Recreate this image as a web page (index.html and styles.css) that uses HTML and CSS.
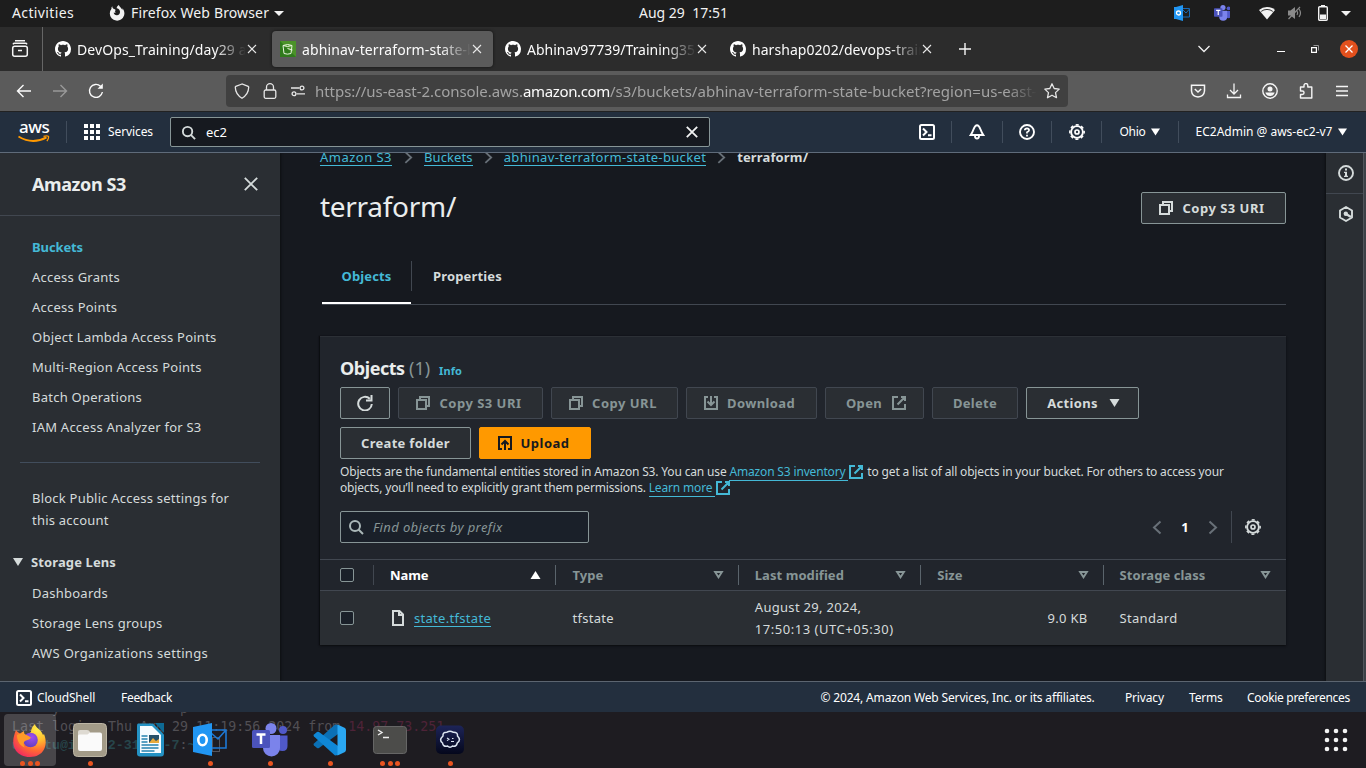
FILE: index.html
```html
<!DOCTYPE html>
<html lang="en">
<head>
<meta charset="utf-8">
<title>abhinav-terraform-state-bucket - S3 bucket</title>
<link rel="stylesheet" href="styles.css">
</head>
<body>
<svg class="defs" aria-hidden="true">
  <symbol id="github" viewBox="0 0 16 16"><path fill="#fff" d="M8 0C3.58 0 0 3.58 0 8c0 3.54 2.29 6.53 5.47 7.59.4.07.55-.17.55-.38 0-.19-.01-.82-.01-1.49-2.01.37-2.53-.49-2.69-.94-.09-.23-.48-.94-.82-1.13-.28-.15-.68-.52-.01-.53.63-.01 1.08.58 1.23.82.72 1.21 1.87.87 2.33.66.07-.52.28-.87.51-1.07-1.78-.2-3.64-.89-3.64-3.95 0-.87.31-1.59.82-2.15-.08-.2-.36-1.02.08-2.12 0 0 .67-.21 2.2.82.64-.18 1.32-.27 2-.27s1.36.09 2 .27c1.53-1.04 2.2-.82 2.2-.82.44 1.1.16 1.92.08 2.12.51.56.82 1.27.82 2.15 0 3.07-1.87 3.75-3.65 3.95.29.25.54.73.54 1.48 0 1.07-.01 1.93-.01 2.2 0 .21.15.46.55.38A8.01 8.01 0 0 0 16 8c0-4.42-3.58-8-8-8z"/></symbol>
  <symbol id="close" viewBox="0 0 10 10"><path d="M1 1l8 8M9 1l-8 8" fill="none" stroke="currentColor" stroke-width="1.1"/></symbol>
  <symbol id="copy" viewBox="0 0 16 16"><path d="M2 5h9v9H2zM5 5V2h9v9h-3" fill="none" stroke="currentColor" stroke-width="2"/></symbol>
  <symbol id="external" viewBox="0 0 16 16"><path d="M7 2H2v12h12V9M10 2h4v4M14 2L6.5 9.500" fill="none" stroke="currentColor" stroke-width="2"/></symbol>
  <symbol id="search" viewBox="0 0 16 16"><circle cx="7" cy="7" r="5" fill="none" stroke="currentColor" stroke-width="2"/><path d="M10.500 10.500L15 15" stroke="currentColor" stroke-width="2"/></symbol>
  <symbol id="gear" viewBox="0 0 16 16"><circle cx="8" cy="8" r="5.900" fill="none" stroke="currentColor" stroke-width="1.900"/><circle cx="8" cy="8" r="7.200" fill="none" stroke="currentColor" stroke-width="1.500" stroke-dasharray="3.100 2.555" stroke-dashoffset="1.550"/><circle cx="8" cy="8" r="2" fill="none" stroke="currentColor" stroke-width="1.700"/></symbol>
  <symbol id="shell" viewBox="0 0 16 16"><rect x="1" y="1" width="14" height="14" rx="1.500" fill="none" stroke="currentColor" stroke-width="2"/><path d="M4 4.500L7.500 8 4 11.500M9 11.300h3.500" fill="none" stroke="currentColor" stroke-width="2"/></symbol>
  <symbol id="down" viewBox="0 0 10 8"><path d="M0 0h10L5 8z" fill="currentColor"/></symbol>
  <symbol id="sort" viewBox="0 0 10 8"><path d="M1.600 1h6.800L5 6.300z" fill="none" stroke="currentColor" stroke-width="1.900"/></symbol>
  <symbol id="chev" viewBox="0 0 10 14"><path d="M1.500 1L8 7l-6.500 6" fill="none" stroke="currentColor" stroke-width="2"/></symbol>
</svg>

<header class="topbar">
  <span class="activities">Activities</span>
  <svg class="fox" width="16" height="16" viewBox="0 0 16 16"><path d="M3.300 1.200C2.400 2.300 2.300 3 2.500 3.700A7.300 7.300 0 1 0 14.800 5.500c-.3-.9-.8-1.600-1.500-2.200.2.700.2 1.200.1 1.700C12.500 3 10.800 2.200 9.800 0 8.400.8 7.700 2 7.700 3.200c1.500.2 2.600 1 3 2.200.9 2.200-.3 4.700-2.700 4.900-1.700.1-3.300-1-3.300-2.700.6.300 1.500.2 2.300-.3-.6-.2-1.200-.7-1.200-1.200l.8-.6-.5-1.300c-.9.100-1.300-.3-1.900-.8-.5-.4-.9-1-.9-2.200z" fill="#f2f2f2"/></svg>
  <span class="app">Firefox Web Browser</span>
  <svg class="caret" width="10" height="5" viewBox="0 0 10 5"><path d="M0 0h10L5 5z" fill="#f2f2f2"/></svg>
  <span class="clock">Aug 29&nbsp; 17:51</span>
  <span class="tray">
    <svg width="16" height="16" viewBox="0 0 16 16"><path d="M9 3.500h6.500v8.500H9M9 5l3 3 3.500-4" fill="none" stroke="#1769b5"/><path d="M0 2h2l7-2v16l-7-2H0z" fill="#2196f3"/><circle cx="4.500" cy="8" r="2" fill="none" stroke="#fff" stroke-width="1.300"/></svg>
    <svg width="16" height="16" viewBox="0 0 34 34"><use href="#teams"/></svg>
    <svg width="16" height="14" viewBox="0 0 16 14"><path d="M8 13.500L0 4a12 12 0 0 1 16 0z" fill="#f2f2f2"/><path d="M2.200 5.400a9.500 9.500 0 0 1 11.600 0" stroke="#1d1d1d" fill="none" stroke-width=".9"/></svg>
    <svg width="16" height="14" viewBox="0 0 16 14"><path d="M1 4.500h2.500L8 1v12L3.500 9.500H1z" fill="#8a8a8a"/><path d="M10 5q1.500 2 0 4M12 3q3 4 0 8" stroke="#8a8a8a" stroke-width="1.200" fill="none"/><path d="M1.500 13L13 1" stroke="#8a8a8a" stroke-width="1.200"/></svg>
    <svg width="10" height="16" viewBox="0 0 10 16"><path d="M3 0h4v2H3z" fill="#f2f2f2"/><rect x=".7" y="1.700" width="8.600" height="13.500" rx="1" fill="none" stroke="#f2f2f2" stroke-width="1.400"/><path d="M2 9.500h6V14H2z" fill="#f2f2f2"/></svg>
    <svg width="10" height="5" viewBox="0 0 10 5"><path d="M0 0h10L5 5z" fill="#f2f2f2"/></svg>
  </span>
</header>

<nav class="tabs">
  <span class="archive"><svg width="18" height="18" viewBox="0 0 18 18" fill="none" stroke="#f5f5f5" stroke-width="1.500"><rect x="1.700" y="6.200" width="14.600" height="10" rx="2"/><path d="M2 4.300q.5-1 1.500-1h11q1 0 1.500 1M4 .8h10M7 10.500h4"/></svg></span>
  <div class="tab"><svg class="fav"><use href="#github"/></svg><span class="title">DevOps_Training/day29 at</span><svg class="x"><use href="#close"/></svg></div>
  <div class="tab active"><svg class="fav" viewBox="0 0 16 16"><path d="M0 0h16v16H0z" fill="#2f7a1c"/><path d="M16 0v16L0 0z" fill="#5fa132" opacity=".6"/><path d="M3 4.500q5-2 9 0l-1 8q-3.500 1.300-7 0zM3 4.500q4.500 2 9 0M7.500 7.500l5 1.500" fill="none" stroke="#e8f5dc"/></svg><span class="title t2">abhinav-terraform-state-bu</span><svg class="x"><use href="#close"/></svg></div>
  <div class="tab"><svg class="fav"><use href="#github"/></svg><span class="title t3">Abhinav97739/Training35</span><svg class="x"><use href="#close"/></svg></div>
  <div class="tab"><svg class="fav"><use href="#github"/></svg><span class="title t4">harshap0202/devops-train</span><svg class="x"><use href="#close"/></svg></div>
  <svg class="plus" width="12" height="12" viewBox="0 0 12 12"><path d="M6 0v12M0 6h12" stroke="#f5f5f5" stroke-width="1.400"/></svg>
  <span class="winctl">
    <svg width="12" height="8" viewBox="0 0 12 8"><path d="M.5 1L6 6.500 11.500 1" fill="none" stroke="#f0f0f0" stroke-width="1.300"/></svg>
    <svg class="min" width="8" height="2"><path d="M0 .5h8" stroke="#fff" stroke-width="1"/></svg>
    <svg width="8" height="8" viewBox="0 0 8 8"><path d="M.6 2.600h4.800v4.800H.6z" fill="none" stroke="#fff" stroke-width="1.200"/><path d="M2.500.5h5v5" fill="none" stroke="#999"/></svg>
    <svg width="18" height="18" viewBox="0 0 18 18"><circle cx="9" cy="9" r="9" fill="#e2501d"/><path d="M5.500 5.500l7 7M12.500 5.500l-7 7" stroke="#fff" stroke-width="1.300"/></svg>
  </span>
</nav>

<div class="toolbar">
  <div class="navbtns">
    <svg width="16" height="16" viewBox="0 0 16 16"><path d="M15 8H1.500M7.500 2L1.500 8l6 6" fill="none" stroke="#fbfbfb" stroke-width="1.400"/></svg>
    <svg width="16" height="16" viewBox="0 0 16 16"><path d="M1 8h13.500M8.500 2l6 6-6 6" fill="none" stroke="#999" stroke-width="1.400"/></svg>
    <svg width="16" height="16" viewBox="0 0 16 16"><path d="M12.500 3.200A6.500 6.500 0 1 0 14.400 9" fill="none" stroke="#fbfbfb" stroke-width="1.400"/><path d="M14.800.5v5.300H9.500z" fill="#fbfbfb"/></svg>
  </div>
  <div class="urlbar">
    <svg width="16" height="16" viewBox="0 0 16 16"><path d="M8 1L1.800 3.300q-.6.300-.5 1Q1.500 11.500 8 15.200q6.500-3.700 6.700-10.900.1-.7-.5-1z" fill="none" stroke="#e6e6e6" stroke-width="1.300"/></svg>
    <svg width="16" height="16" viewBox="0 0 16 16"><rect x="2.200" y="7" width="11.600" height="8.300" rx="1.500" fill="none" stroke="#e6e6e6" stroke-width="1.300"/><path d="M4.500 7V4.200a3.500 3.500 0 0 1 7 0V7" fill="none" stroke="#e6e6e6" stroke-width="1.300"/></svg>
    <svg width="16" height="16" viewBox="0 0 16 16" fill="none" stroke="#e6e6e6" stroke-width="1.300"><path d="M1 5h8.500M6.500 10.800H15"/><circle cx="12" cy="5" r="1.900"/><circle cx="4" cy="10.800" r="1.900"/></svg>
    <span class="url"><span class="host">https://us-east-2.console.aws.</span><b>amazon.com</b>/s3/buckets/abhinav-terraform-state-bucket?region=us-east-2</span>
    <svg width="16" height="16" viewBox="0 0 16 16"><path d="M8 .8l2.200 4.700 5 .6-3.700 3.500 1 5.100L8 12.200l-4.500 2.500 1-5.100L.8 6.100l5-.6z" fill="none" stroke="#e6e6e6" stroke-width="1.300" stroke-linejoin="round"/></svg>
  </div>
  <div class="tools">
    <svg width="16" height="16" viewBox="0 0 16 16" fill="none" stroke="#f5f5f5" stroke-width="1.500"><path d="M1.500 2.200h13V8q-.5 5.500-6.500 6Q2 13.500 1.500 8zM4.800 6L8 9l3.200-3"/></svg>
    <svg width="16" height="16" viewBox="0 0 16 16" fill="none" stroke="#f5f5f5" stroke-width="1.300"><path d="M8 .5v10.500M4 7l4 4 4-4M1.500 11.500v3h13v-3"/></svg>
    <svg width="16" height="16" viewBox="0 0 16 16"><circle cx="8" cy="8" r="7.200" fill="none" stroke="#f5f5f5" stroke-width="1.400"/><circle cx="8" cy="6" r="2.500" fill="#f5f5f5"/><path d="M3.300 9.500h9.400Q11.500 13 8 13T3.300 9.500z" fill="#f5f5f5"/></svg>
    <svg width="16" height="16" viewBox="0 0 16 16"><path d="M6 4V2.500a1.900 1.900 0 0 1 3.800 0V4h4v11H2.500v-3.500h1.800a1.700 1.700 0 0 0 0-3.500H2.500V4z" fill="none" stroke="#f5f5f5" stroke-width="1.400" stroke-linejoin="round"/></svg>
    <svg width="16" height="16" viewBox="0 0 16 16"><path d="M2 3.500h12M2 8h12M2 12.500h12" stroke="#f5f5f5" stroke-width="1.300"/></svg>
  </div>
</div>

<header class="aws">
  <div class="logo"><span>aws</span><svg width="32" height="9" viewBox="0 0 32 9"><path d="M.5 1.500q14 8.500 28 .8" fill="none" stroke="#f90" stroke-width="1.900"/><path d="M25.500 1.300q4-.9 5 .1.500 1.800-1.600 4.800" fill="none" stroke="#f90" stroke-width="1.300"/></svg></div>
  <i class="sep"></i>
  <svg class="grid" width="16" height="16" viewBox="0 0 16 16" fill="#fff"><path d="M0 0h4v4H0zM6 0h4v4H6zM12 0h4v4h-4zM0 6h4v4H0zM6 6h4v4H6zM12 6h4v4h-4zM0 12h4v4H0zM6 12h4v4H6zM12 12h4v4h-4z"/></svg>
  <span class="services">Services</span>
  <div class="search"><svg width="15" height="15"><use href="#search"/></svg><span>ec2</span><svg width="12" height="12" viewBox="0 0 12 12"><path d="M.8.8l10.400 10.400M11.200.8L.8 11.200" stroke="#f2f3f3" stroke-width="1.800"/></svg></div>
  <div class="acct">
    <span class="cell c1"><svg width="16" height="16"><use href="#shell"/></svg></span><i class="sep"></i>
    <span class="cell c2"><svg width="16" height="16" viewBox="0 0 16 16"><path d="M8 1.200c-3.300 0-2.800 5-6.300 9.800h12.600C10.800 6.200 11.300 1.200 8 1.200z" fill="none" stroke="#fff" stroke-width="2"/><path d="M6 12a2 2.500 0 0 0 4 0" stroke="#fff" stroke-width="1.900" fill="none"/></svg></span><i class="sep"></i>
    <span class="cell c3"><svg width="16" height="16" viewBox="0 0 16 16"><circle cx="8" cy="8" r="7" fill="none" stroke="#fff" stroke-width="1.900"/><path d="M5.800 6.300Q5.900 4.300 8 4.300q2 .1 2.100 1.900Q10 7.300 8 8.200v1.300" fill="none" stroke="#fff" stroke-width="1.700"/><path d="M7.100 10.700h1.800v1.700H7.100z" fill="#fff"/></svg></span><i class="sep"></i>
    <span class="cell c4"><svg width="16" height="16"><use href="#gear"/></svg></span><i class="sep"></i>
    <span class="cell c5"><span class="ohio">Ohio</span><svg width="9" height="8"><use href="#down"/></svg></span><i class="sep"></i>
    <span class="cell c6"><span>EC2Admin @ aws-ec2-v7</span><svg width="9" height="8"><use href="#down"/></svg></span>
  </div>
</header>

<div class="work">
  <aside class="side">
    <div class="sidehead"><h2>Amazon S3</h2><svg width="14" height="14" viewBox="0 0 14 14"><path d="M.8.8l12.400 12.400M13.200.8L.8 13.200" stroke="#d5dbdb" stroke-width="1.800"/></svg></div>
    <ul class="links">
      <li class="on">Buckets</li><li>Access Grants</li><li>Access Points</li><li>Object Lambda Access Points</li><li>Multi-Region Access Points</li><li>Batch Operations</li><li>IAM Access Analyzer for S3</li>
    </ul>
    <hr>
    <p class="block">Block Public Access settings for<br>this account</p>
    <div class="group"><svg width="10" height="8"><use href="#down"/></svg><span>Storage Lens</span></div>
    <ul class="links sub"><li>Dashboards</li><li>Storage Lens groups</li><li class="org">AWS Organizations settings</li></ul>
  </aside>

  <main class="main">
    <div class="crumbs"><a class="k1">Amazon S3</a><svg><use href="#chev"/></svg><a class="k2">Buckets</a><svg><use href="#chev"/></svg><a>abhinav-terraform-state-bucket</a><svg><use href="#chev"/></svg><b>terraform/</b></div>
    <div class="titlebar"><h1>terraform/</h1><button class="btn b-copy"><svg><use href="#copy"/></svg><span>Copy S3 URI</span></button></div>
    <div class="pagetabs"><span class="sel">Objects</span><i></i><span class="other">Properties</span></div>

    <section class="card">
      <h3><b>Objects</b> <span>(1)</span> <a>Info</a></h3>
      <div class="actions">
        <button class="btn b-ref"><svg viewBox="0 0 16 16"><path d="M12.800 3.800A6.800 6.800 0 1 0 14.800 9M14.500 0v5.500H9" fill="none" stroke="currentColor" stroke-width="2"/></svg></button>
        <button class="btn off b-copy"><svg><use href="#copy"/></svg><span>Copy S3 URI</span></button>
        <button class="btn off b-url"><svg><use href="#copy"/></svg><span>Copy URL</span></button>
        <button class="btn off b-dl"><svg viewBox="0 0 16 16"><path d="M5 2H2v12h12V2h-3M8 1v9M4.500 6.500L8 10l3.500-3.500" fill="none" stroke="currentColor" stroke-width="2"/></svg><span>Download</span></button>
        <button class="btn off b-open"><span>Open</span><svg><use href="#external"/></svg></button>
        <button class="btn off b-del"><span>Delete</span></button>
        <button class="btn b-act"><span>Actions</span><svg class="tri"><use href="#down"/></svg></button>
        <button class="btn b-new"><span>Create folder</span></button>
        <button class="btn b-up"><svg viewBox="0 0 16 16"><path d="M5 14H2V2h12v12h-3M8 15V6M4.500 9.500L8 6l3.500 3.500" fill="none" stroke="currentColor" stroke-width="2"/></svg><span>Upload</span></button>
      </div>
      <p class="desc">Objects are the fundamental entities stored in Amazon S3. You can use <a>Amazon S3 inventory </a><svg><use href="#external"/></svg> to get a list of all objects in your bucket. For others to access your<br>objects, you’ll need to explicitly grant them permissions. <a>Learn more </a><svg><use href="#external"/></svg></p>
      <div class="filter">
        <div class="find"><svg width="16" height="16"><use href="#search"/></svg><span>Find objects by prefix</span></div>
        <div class="pager"><svg class="prev" width="10" height="15"><use href="#chev"/></svg><b>1</b><svg width="10" height="15"><use href="#chev"/></svg><i></i><svg class="cog" width="16" height="16"><use href="#gear"/></svg></div>
      </div>
      <div class="row head">
        <span class="chk"><i></i></span>
        <span class="col name lit"><b>Name</b><svg viewBox="0 0 10 8"><path d="M0 8h10L5 0z" fill="#fff"/></svg></span>
        <span class="col"><b>Type</b><svg><use href="#sort"/></svg></span>
        <span class="col"><b>Last modified</b><svg><use href="#sort"/></svg></span>
        <span class="col"><b>Size</b><svg><use href="#sort"/></svg></span>
        <span class="col"><b>Storage class</b><svg><use href="#sort"/></svg></span>
      </div>
      <div class="row body">
        <span class="chk"><i></i></span>
        <span class="cellb name"><svg width="12" height="16" viewBox="0 0 12 16"><path d="M1 1h6.500L11 4.500V15H1zM7 1v4h4" fill="none" stroke="#d5dbdb" stroke-width="2"/></svg><a>state.tfstate</a></span>
        <span class="cellb">tfstate</span>
        <span class="cellb date"><span>August 29, 2024,</span><br><span class="time">17:50:13 (UTC+05:30)</span></span>
        <span class="cellb size">9.0 KB</span>
        <span class="cellb">Standard</span>
      </div>
    </section>
  </main>

  <aside class="rail">
    <span><svg width="16" height="16" viewBox="0 0 16 16"><circle cx="8" cy="8" r="7" fill="none" stroke="#d5dbdb" stroke-width="1.900"/><path d="M7 3.500h2v2H7zM6 6.700h3v4h1V12H6v-1.300h1V8H6z" fill="#d5dbdb"/></svg></span>
    <span><svg width="16" height="16" viewBox="0 0 16 16"><path d="M8 1l6 3.500v7L8 15l-6-3.500v-7z" fill="none" stroke="#d5dbdb" stroke-width="1.900" stroke-linejoin="round"/><path d="M8 8l5 3" stroke="#d5dbdb" stroke-width="2.200"/><circle cx="7.800" cy="7.800" r="2.200" fill="#d5dbdb"/></svg></span>
    <i class="scroll"></i>
  </aside>
</div>

<footer class="foot">
  <svg width="16" height="16"><use href="#shell"/></svg><span class="cs">CloudShell</span><span class="fb">Feedback</span>
  <span class="copyr">© 2024, Amazon Web Services, Inc. or its affiliates.</span><span class="pv">Privacy</span><span class="tm">Terms</span><span class="ck">Cookie preferences</span>
</footer>

<div class="dock">
  <pre class="term">     y               p
Last login: Thu Aug 29 11:19:56 2024 from <em>14.97.73.251</em>
<b>ubuntu@ip-172-31-40-7</b>:<b>~</b>$ <i></i></pre>
  <div class="app on"><svg viewBox="0 0 34 34">
    <defs><radialGradient id="fx" cx=".75" cy=".15" r="1"><stop offset="0" stop-color="#fff04d"/><stop offset=".35" stop-color="#ffbd2e"/><stop offset=".65" stop-color="#ff6a32"/><stop offset="1" stop-color="#ef1f68"/></radialGradient><radialGradient id="fp" cx=".6" cy=".3" r=".8"><stop offset="0" stop-color="#a04ff0"/><stop offset="1" stop-color="#5a3cb8"/></radialGradient></defs>
    <path d="M3 7c1 1.500 2 2.500 4 3.500L11 8c0 2 .500 3.500 2 4.500L18 9c0-3 1.500-6 4-8 .5 4 6 5 8 11l1-1c5 12-1 23-14 23S-2 24 1 13c.5-2 1-4 2-6z" fill="url(#fx)"/><circle cx="17.500" cy="17" r="7.300" fill="url(#fp)"/><path d="M4 12c5-2.500 9-.5 14 2.500-1 2-3 2.500-5 3-3 1-3 4.500-1 7-5-1.500-8-6.500-8-12.500z" fill="#ff9a27"/></svg><span class="dots"><i></i><i></i><i></i></span></div>
  <div class="app"><svg viewBox="0 0 34 34"><rect x=".5" y=".5" width="33" height="33" rx="4" fill="#a39b88" stroke="#bdb6a5"/><path d="M5 9q0-2 2-2h7q2 0 3 2v5H5z" fill="#dedad2"/><path d="M5 13q0-1.500 1.500-1.500h8L17 9.500h10q2 0 2 2V26q0 2-2 2H7q-2 0-2-2z" fill="#fafafa"/></svg><span class="dots"><i></i></span></div>
  <div class="app"><svg viewBox="0 0 34 34"><path d="M5 .5h15L31 11.500V30q0 3.500-3 3.500H7q-3 0-3-3V3q0-2.500 1-2.500z" fill="#2492c4"/><path d="M22 0h9v10z" fill="#0e6a94"/><path d="M7 3h12l9 9v18H7z" fill="#f5fbff"/><path d="M8.500 13h6M8.500 16h6M8.500 19h6M8.500 22h17M8.500 25h17M8.500 28h13" stroke="#2583b0" stroke-width="1.300"/><path d="M16 12h10v8H16z" fill="#24506b"/><path d="M16 20l4-5 3 3 3-2v4z" fill="#e6a93c"/></svg></div>
  <div class="app"><svg viewBox="0 0 34 34"><path d="M18 7h15v18H18M18 10l7 6L33 7" fill="none" stroke="#1d78d5" stroke-width="1.600"/><path d="M0 4l19-4v33L0 29z" fill="#2196f3"/><ellipse cx="9.500" cy="17" rx="4.200" ry="5.300" fill="none" stroke="#fff" stroke-width="2.600"/></svg><span class="dots"><i></i></span></div>
  <div class="app"><svg class="tm" viewBox="0 0 36 34"><g id="teams"><circle cx="31" cy="7" r="4" fill="#5059c9"/><path d="M26 12.500h9.500V23q0 5-5 5T26 23z" fill="#5059c9"/><circle cx="19" cy="5.500" r="5.500" fill="#7b83eb"/><path d="M11 12h17v13a8.500 8.500 0 0 1-17 0z" fill="#7b83eb"/><rect y="7" width="18" height="18" rx="1.500" fill="#4b53bc"/><path d="M4.500 11.500h9M9 11.500V21" stroke="#fff" stroke-width="2.500"/></g></svg><span class="dots"><i></i></span></div>
  <div class="app"><svg viewBox="0 0 34 34"><path d="M25 2v9L6 25q-1 .5-2 0l-3-2.500q-1-1 0-2L22 1.500z" fill="#0b70b5"/><path d="M25 32v-9L6 9q-1-.5-2 0l-3 2.500q-1 1 0 2L22 32.500z" fill="#0f87d6"/><path d="M24.500 1.500l7 3.200q1.500.8 1.500 2.500v19.600q0 1.700-1.500 2.500l-7 3.200z" fill="#2aa7f2"/></svg><span class="dots"><i></i></span></div>
  <div class="app"><svg viewBox="0 0 34 34"><rect x=".5" y="3.500" width="33" height="27" rx="3" fill="#4c4c4a" stroke="#666"/><path d="M5 7l4 2.500L5 12M10 14.500h6" fill="none" stroke="#eee" stroke-width="1.400"/></svg><span class="dots"><i></i><i></i><i></i></span></div>
  <div class="app"><svg viewBox="0 0 34 34"><defs><linearGradient id="tg" x2="0" y2="1"><stop stop-color="#1d2458"/><stop offset="1" stop-color="#04071c"/></linearGradient></defs><rect x="3" y="2.500" width="28" height="28.500" rx="5" fill="url(#tg)"/><path d="M10 13q-.5-4 4-3.800 3-2 6 0 5-.3 4.500 3.800 4 4-.3 7-.7 4-4.700 3-2.500 2.500-5 0-4.500 1-5-3-4-3 .5-7z" fill="none" stroke="#dde6f2" stroke-width="1.500"/><path d="M14 15l2 1.300-2 1.300M18 18.500h3M19 15.500h1.500" fill="none" stroke="#dde6f2" stroke-width="1.100"/></svg><span class="dots"><i></i></span></div>
  <svg class="apps" width="24" height="24" viewBox="0 0 24 24" fill="#f5f5f5"><circle cx="3" cy="3" r="2.300"/><circle cx="12" cy="3" r="2.300"/><circle cx="21" cy="3" r="2.300"/><circle cx="3" cy="12" r="2.300"/><circle cx="12" cy="12" r="2.300"/><circle cx="21" cy="12" r="2.300"/><circle cx="3" cy="21" r="2.300"/><circle cx="12" cy="21" r="2.300"/><circle cx="21" cy="21" r="2.300"/></svg>
</div>
</body>
</html>
```
FILE: styles.css
```css
* { box-sizing: border-box; }
body {
  margin: 0; width: 1366px; height: 768px; overflow: hidden;
  display: flex; flex-direction: column;
  font: 13px/22px "Noto Sans", "Open Sans", sans-serif;
  color: #d5dbdb; background: #16191f;
}
svg { display: block; flex: none; }
.defs { position: absolute; width: 0; height: 0; }
h1, h2, h3, p, ul, pre { margin: 0; padding: 0; font-weight: 400; }
ul { list-style: none; }
i { display: block; }

/* Desktop bar */
.topbar { height: 27px; flex: none; background: #1d1d1d; color: #f2f2f2; display: flex; align-items: center; font-size: 14px; padding: 0 15px 1px 12px; white-space: nowrap; }
.activities { width: 97px; letter-spacing: .37px; }
.app { letter-spacing: .14px; }
.topbar .app { width: 143px; margin-left: 6px; }
.clock { margin-left: 355px; }
.tray { margin-left: auto; display: flex; align-items: center; }
.tray svg { margin-left: 12px; }
.tray svg:nth-child(2) { margin-left: 24px; }
.tray svg:nth-child(3) { margin-left: 29px; }
.tray svg:nth-child(5) { margin-left: 15px; }
.tray svg:nth-child(6) { margin-left: 13px; }

/* Browser tabs */
.tabs { height: 44px; flex: none; background: #2c2c2c; display: flex; align-items: center; color: #fbfbfb; }
.archive { width: 43px; height: 44px; border-right: 1px solid #666; display: flex; align-items: center; padding-left: 11px; margin-right: 4px; }
.tab { width: 221px; height: 36px; margin-right: 4px; padding: 0 11px 0 8px; border-radius: 4px; display: flex; align-items: center; }
.tab.active { background: #5b5b5b; box-shadow: 0 0 3px #111; }
.fav { width: 16px; height: 16px; }
.title { margin-left: 6px; width: 170px; overflow: hidden; white-space: nowrap; font-size: 14px; letter-spacing: .1px; padding-top: 1px; -webkit-mask-image: linear-gradient(90deg, #000 138px, transparent 169px); mask-image: linear-gradient(90deg, #000 138px, transparent 169px); }
.t3 { letter-spacing: -.01px; }
.t4 { letter-spacing: .05px; }
.x { width: 10px; height: 10px; color: #e8e8e8; }
.plus { margin-left: 12px; }
.winctl { margin-left: auto; display: flex; align-items: center; padding-right: 8px; }
.winctl svg:nth-child(2) { margin: 6px 0 0 67px; }
.winctl svg:nth-child(3) { margin-left: 26px; }
.winctl svg:nth-child(4) { margin-left: 21px; }

/* Browser toolbar */
.toolbar { height: 41px; flex: none; background: #5b5b5b; border-bottom: 1px solid #222; display: flex; align-items: center; }
.navbtns { display: flex; gap: 20px; padding-left: 16px; width: 226px; }
.urlbar { width: 842px; height: 32px; border-radius: 4px; background: #404040; display: flex; align-items: center; padding: 0 8px; }
.urlbar svg:nth-child(2) { margin-left: 12px; }
.urlbar svg:nth-child(3) { margin-left: 12px; }
.url { margin: 0 7px 0 9px; width: 722px; overflow: hidden; white-space: nowrap; font-size: 15px; letter-spacing: .02px; color: #a3a3a3; -webkit-mask-image: linear-gradient(90deg, #000 692px, transparent 722px); mask-image: linear-gradient(90deg, #000 692px, transparent 722px); }
.host { letter-spacing: -.05px; }
.url b { font-weight: 400; color: #fbfbfb; letter-spacing: -.36px; }
.tools { display: flex; gap: 20px; margin-left: 122px; }

/* Console header */
.aws { height: 41px; flex: none; background: #232f3e; border-bottom: 1px solid #5f6b7a; display: flex; align-items: center; color: #fff; font-size: 12px; padding-left: 18px; white-space: nowrap; }
.logo { width: 48px; height: 28px; }
.logo span { display: block; height: 18px; line-height: 17px; font-size: 17px; letter-spacing: -.5px; font-weight: 500; padding-left: 1px; }
.logo svg { margin-top: -1px; }
.sep { width: 1px; height: 22px; background: #414d5c; flex: none; }
.grid { margin-left: 17px; }
.services { margin-left: 8px; width: 62px; letter-spacing: -.1px; }
.search { width: 540px; height: 30px; background: #16191f; border: 1px solid #879596; border-radius: 2px; display: flex; align-items: center; padding: 0 11px 0 10px; font-size: 13px; }
.search svg:first-child { color: #d5dbdb; }
.search span { flex: 1; margin-left: 10px; }
.acct { display: flex; align-items: center; margin-left: auto; }
.cell { display: flex; align-items: center; justify-content: center; }
.c1 { width: 48px; } .c2 { width: 50px; } .c3 { width: 48px; } .c4 { width: 49px; }
.c5 { width: 76px; } .c6 { width: 187px; padding-right: 2px; }
.c5 svg, .c6 svg { margin-left: 6px; }
.ohio { letter-spacing: -.29px; }

.work { height: 528px; flex: none; display: flex; overflow: hidden; }

/* Side navigation */
.side { width: 280px; flex: none; background: #2a2e33; box-shadow: 1px 0 2px #0d0f12; z-index: 1; }
.sidehead { height: 63px; border-bottom: 1px solid #414750; display: flex; align-items: center; justify-content: space-between; padding: 0 22px 0 32px; }
.sidehead h2 { font-size: 18px; font-weight: 700; letter-spacing: -.39px; color: #eaeded; }
.links { padding: 16px 0 0 32px; letter-spacing: .24px; }
.links li { height: 30px; line-height: 30px; white-space: nowrap; }
.links .on { color: #44b9d6; font-weight: 700; letter-spacing: -.11px; }
.links .org { letter-spacing: .31px; }
.side hr { margin: 20px 20px 0; border: 0; height: 1px; background: #414d5c; }
.block { padding: 24px 0 0 32px; letter-spacing: .22px; }
.group { height: 22px; margin-top: 20px; padding-left: 13px; display: flex; align-items: center; gap: 8px; font-weight: 700; letter-spacing: .11px; }
.sub { padding-top: 5px; }

/* Main content */
.main { flex: 1; min-width: 0; padding: 0 40px; }
.crumbs { margin-top: -7px; height: 22px; display: flex; align-items: center; white-space: nowrap; }
.crumbs a { letter-spacing: .34px; }
.crumbs .k1 { letter-spacing: .48px; }
.crumbs .k2 { letter-spacing: .1px; }
.crumbs b { letter-spacing: .14px; color: #d5dbdb; }
.crumbs svg { width: 9px; height: 13px; margin: 0 11px 0 12px; color: #687078; }
.crumbs .k2 ~ svg { margin-left: 11px; }
.main a { color: #44b9d6; }
.crumbs a, .desc a, .name a { border-bottom: 1px solid #44b9d6; line-height: 16px; }
.titlebar { margin-top: 24px; height: 32px; display: flex; justify-content: space-between; }
.titlebar h1 { font-size: 28px; line-height: 28px; letter-spacing: -.29px; color: #eaeded; }
.btn { height: 32px; flex: none; display: flex; align-items: center; justify-content: center; background: #2a2e33; border: 1px solid #879596; border-radius: 2px; color: #d5dbdb; font: 700 13px/20px "Noto Sans", sans-serif; letter-spacing: .3px; padding: 0; white-space: nowrap; }
.btn svg { width: 16px; height: 16px; }
.off { border-color: #414750; color: #879596; }
.b-copy { width: 145px; gap: 8px; letter-spacing: .49px; padding-right: 4px; }
.b-url { width: 127px; gap: 8px; letter-spacing: .5px; padding-right: 4px; }
.b-dl { width: 131px; gap: 8px; letter-spacing: .38px; padding-right: 5px; }
.b-open { width: 99px; gap: 9px; padding-left: 4px; }
.b-del { width: 86px; }
.b-act { width: 113px; gap: 11px; padding-left: 2px; }
.b-act .tri { width: 11px; height: 8px; }
.b-ref { width: 50px; color: #d5dbdb; }
.b-new { width: 131px; }
.b-up { width: 112px; gap: 8px; background: #f90; border-color: #f90; color: #16191f; letter-spacing: .49px; padding-right: 4px; }
.pagetabs { margin: 37px 0 0 2px; height: 44px; border-bottom: 1px solid #414750; display: flex; font-weight: 700; letter-spacing: .15px; }
.pagetabs span { padding-top: 4px; }
.pagetabs .sel { width: 89px; height: 43px; text-align: center; color: #44b9d6; border-bottom: 2px solid #fff; }
.pagetabs i { width: 1px; height: 30px; background: #414750; }
.pagetabs .other { margin-left: 21px; }

.card { margin-top: 31px; height: 309px; background: #21252c; border-top: 1px solid #2c3036; box-shadow: 0 1px 2px #0b0d10, -1px 0 1px #0d0f12; }
.card h3 { margin: 20px 0 0 20px; height: 23px; font-size: 18px; display: flex; align-items: baseline; }
.card h3 b { color: #eaeded; letter-spacing: -.45px; width: 69px; }
.card h3 span { color: #879596; width: 30px; }
.card h3 a { font-size: 11px; font-weight: 700; letter-spacing: .1px; }
.actions { margin: 7px 20px 0; display: flex; flex-wrap: wrap; gap: 8px; }
.desc { margin: 5px 20px 0; height: 32px; font-size: 12px; line-height: 16px; letter-spacing: -.163px; white-space: nowrap; }
.desc svg { display: inline-block; width: 16px; height: 16px; margin: -4px 0 -2px; vertical-align: -2px; color: #44b9d6; }
.desc a { line-height: 14px; }
.filter { margin: 15px 20px 0; display: flex; justify-content: space-between; align-items: center; }
.find { width: 249px; height: 32px; background: #1a2029; border: 1px solid #879596; border-radius: 2px; display: flex; align-items: center; padding-left: 7px; gap: 9px; color: #879596; font-style: italic; letter-spacing: .38px; }
.find svg { color: #aab7b8; }
.pager { display: flex; align-items: center; color: #687078; padding-right: 5px; }
.pager .prev { transform: scaleX(-1); }
.pager b { color: #fff; width: 46px; text-align: center; }
.pager > i { width: 1px; height: 32px; background: #414750; margin: 0 13px 0 13px; }
.pager .cog { color: #d5dbdb; }

.row { display: flex; align-items: center; }
.head { height: 32px; margin-top: 16px; border-top: 1px solid #414750; border-bottom: 1px solid #414750; color: #879596; }
.chk { width: 53px; padding-left: 20px; }
.chk i { width: 14px; height: 14px; border: 1px solid #879596; border-radius: 2px; background: #1a2029; }
.col { width: 182.400px; height: 20px; border-left: 1px solid #5a646c; padding: 0 14px 0 16px; display: flex; align-items: center; justify-content: space-between; letter-spacing: .06px; }
.col svg { width: 11px; height: 8px; }
.lit { color: #fff; border-color: #414750; letter-spacing: -.1px; }
.body { height: 54px; background: #2a2e33; }
.cellb { width: 182.400px; padding: 0 16px 0 17px; letter-spacing: .3px; white-space: nowrap; }
.cellb.name { display: flex; align-items: center; }
.cellb.name svg { margin: 0 10px 0 2px; }
.time { letter-spacing: .54px; }
.size { text-align: right; padding-right: 15px; }

.rail { width: 40px; flex: none; background: #2a2e33; position: relative; box-shadow: -1px 0 2px #0d0f12; }
.rail span { height: 41px; display: flex; align-items: center; justify-content: center; border-bottom: 1px solid #414750; }
.rail span + span { border: 0; height: 39px; }
.scroll { position: absolute; right: 0; top: -12px; width: 3px; height: 540px; background: #3c4147; border-left: 1px solid #50555b; }

.foot { height: 31px; flex: none; background: #232f3e; border-top: 1px solid #5c6570; display: flex; align-items: center; color: #fff; font-size: 12px; padding: 2px 16px 0; white-space: nowrap; letter-spacing: -.16px; }
.cs { margin-left: 5px; width: 84px; }
.fb { letter-spacing: -.3px; }
.copyr { margin-left: auto; width: 304.500px; }
.pv { width: 64px; } .foot .tm { width: 58px; }
.ck { letter-spacing: -.3px; }

/* Dock */
.dock { height: 56px; flex: none; background: #1e1c21; position: relative; display: flex; align-items: center; overflow: hidden; }
.term { position: absolute; left: 12px; top: -12px; font: 13.300px/18px "DejaVu Sans Mono", monospace; color: #514f54; }
.term em { font-style: normal; color: #4e2338; }
.term b { color: #27454a; font-family: "Liberation Mono", monospace; }
.term i { display: inline-block; width: 8px; height: 15px; border: 1px solid #55535a; vertical-align: -3px; }
.dock .app { width: 52px; height: 52px; margin: 0 4px; border-radius: 4px; position: relative; display: flex; justify-content: center; align-items: center; flex: none; }
.dock .on { background: rgba(255, 255, 255, .19); }
.dock .app > svg { width: 34px; height: 34px; overflow: visible; }
.dock .app .tm { width: 36px; }
.dots { position: absolute; left: 0; right: 0; bottom: 0; display: flex; gap: 2.300px; justify-content: center; }
.dots i { width: 5px; height: 5px; border-radius: 50%; background: #e95420; }
.apps { margin: 0 18px 0 auto; position: relative; }
```
